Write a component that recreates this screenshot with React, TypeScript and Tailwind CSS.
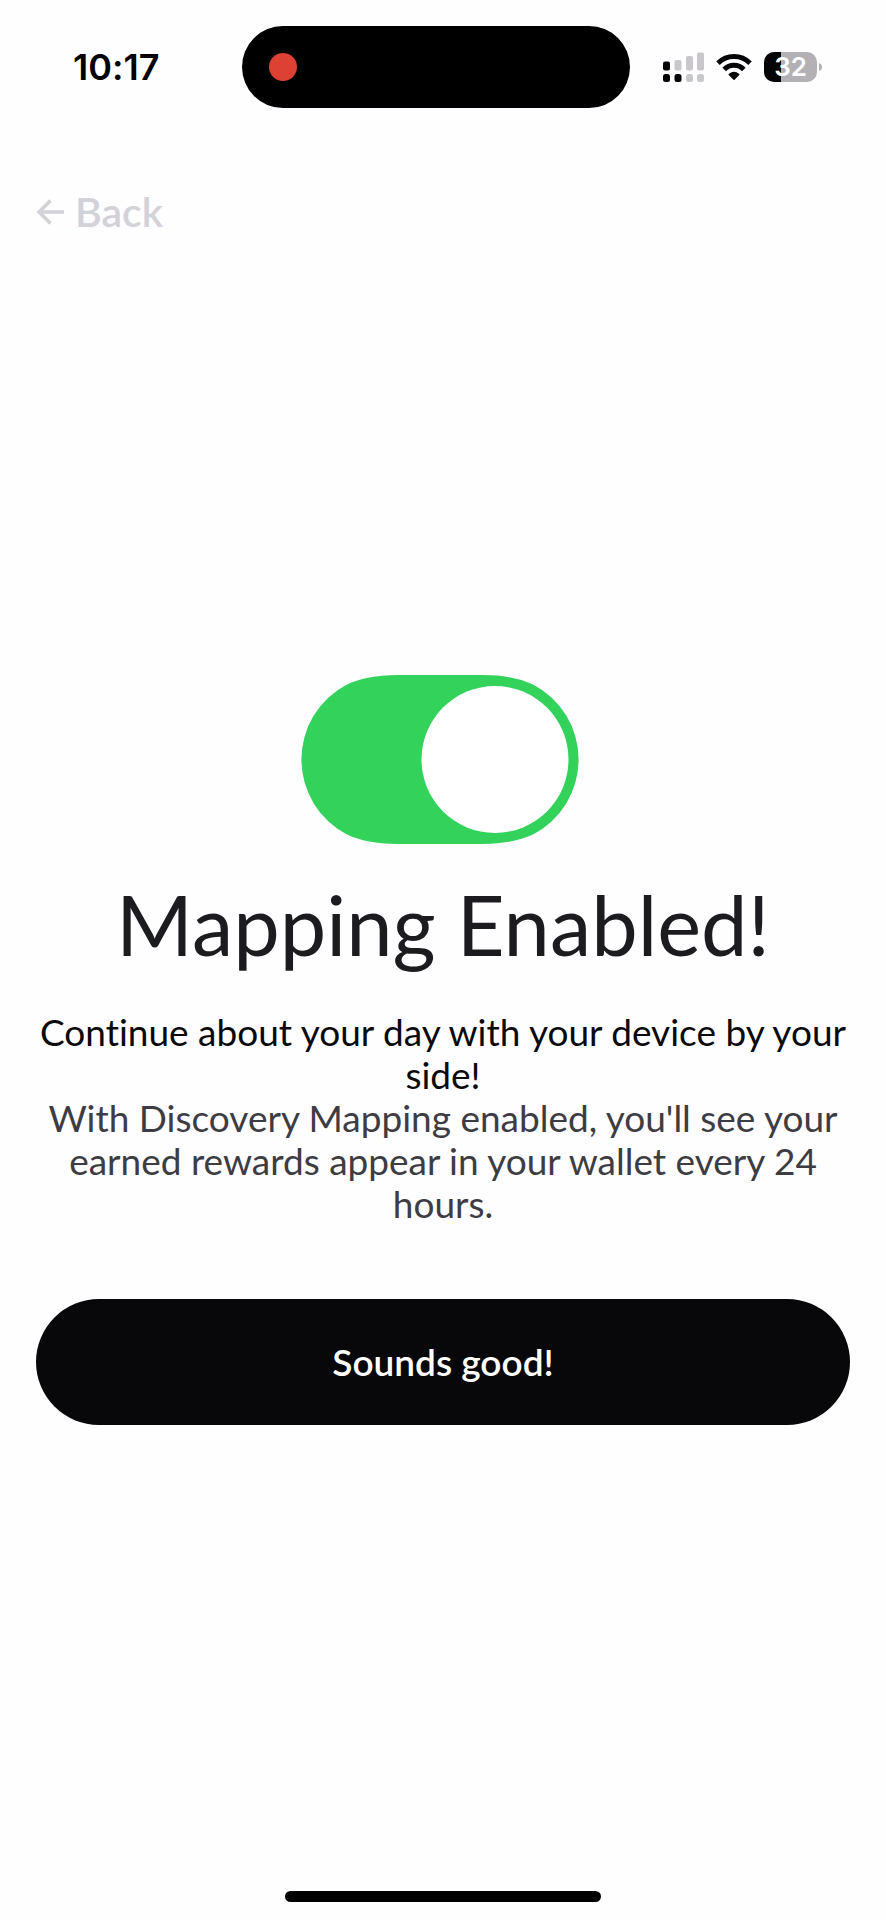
import { useState } from "react";

function SignalIcon() {
  return (
    <svg width="41" height="30" viewBox="0 0 41 30" aria-hidden="true">
      <g fill="#c9c7cb">
        <rect x="11.500" y="8" width="7" height="10.500" rx="2" />
        <rect x="23" y="4" width="7" height="14.500" rx="2" />
        <rect x="34" y="0.500" width="7" height="18" rx="2" />
        <rect x="23" y="22" width="7" height="8" rx="2.500" />
        <rect x="34" y="22" width="7" height="8" rx="2.500" />
      </g>
      <g fill="#050407">
        <rect x="0" y="9.500" width="7" height="9" rx="2" />
        <rect x="0" y="22" width="7" height="8" rx="2.500" />
        <rect x="11.500" y="22" width="7" height="8" rx="2.500" />
      </g>
    </svg>
  );
}

function WifiIcon() {
  return (
    <svg width="36" height="28" viewBox="0 0 36 28" aria-hidden="true">
      <g fill="none" stroke="#050407" strokeWidth="5">
        <path d="M2 10.200A22.600 22.600 0 0 1 34 10.200" />
        <path d="M8.200 16.500A13.700 13.700 0 0 1 27.800 16.500" />
      </g>
      <path d="M18 27.300 12.700 22Q12.200 21.300 13 20.800A8 8 0 0 1 23 20.800Q23.800 21.300 23.300 22Z" fill="#050407" />
    </svg>
  );
}

function Battery({ level }: { level: number }) {
  return (
    <div className="flex items-center gap-0.5">
      <div className="relative flex h-[30px] w-[53px] items-center justify-center overflow-hidden rounded-[10px] bg-[#b3b1b5]">
        <div className="absolute inset-y-0 left-0 bg-[#050407]" style={{ width: `${level}%` }} />
        <span className="relative text-[26px] leading-none font-semibold text-white">{level}</span>
      </div>
      <svg width="3" height="8" viewBox="0 0 3 8" aria-hidden="true">
        <path d="M0 0Q3 1 3 4T0 8Z" fill="#b3b1b5" />
      </svg>
    </div>
  );
}

function StatusBar() {
  return (
    <header className="grid grid-cols-[18fr_auto_19fr] items-center pt-[26px] font-['Inter',sans-serif]">
      <time className="pl-[73px] text-[36px] leading-none font-semibold text-black">10:17</time>
      <div className="flex h-[82px] w-[388px] items-center rounded-full bg-black pl-[27px]">
        <span className="size-7 rounded-full bg-[#dc4134]" />
      </div>
      <div className="flex items-center justify-end gap-3 pr-16">
        <SignalIcon />
        <WifiIcon />
        <Battery level={32} />
      </div>
    </header>
  );
}

function MappingSwitch() {
  const [on, setOn] = useState(true);
  return (
    <div className="relative">
      <svg width="284" height="169" viewBox="0 0 284 169" aria-hidden="true">
        <path
          d="M96 0H182C202 0 219 3.500 232 9.500A84.500 84.500 0 0 1 232 159.500C219 165.500 202 169 182 169H96C76 169 59 165.500 46 159.500A84.500 84.500 0 0 1 46 9.500C59 3.500 76 0 96 0Z"
          fill={on ? "#32d25b" : "#d2d2d8"}
        />
        <circle cx={on ? 194 : 84} cy="84.500" r="73.500" fill="#ffffff" />
      </svg>
      <input
        type="checkbox"
        role="switch"
        aria-label="Mapping"
        checked={on}
        onChange={(e) => setOn(e.target.checked)}
        className="absolute inset-0 cursor-pointer appearance-none"
      />
    </div>
  );
}

export default function App() {
  return (
    <div className="flex min-h-screen flex-col bg-[#fefdff] font-['Lato',sans-serif] [font-variant-ligatures:none]">
      <StatusBar />
      <nav className="px-9 pt-20">
        <button type="button" className="flex items-center gap-2.5 text-[41px] leading-[48px] font-semibold text-[#d3d2d8]">
          <svg width="29" height="26" viewBox="0 0 29 26" fill="none" stroke="currentColor" strokeWidth="3.500" aria-hidden="true">
            <path d="M28 13H3M14.500 1.500 3 13 14.500 24.500" />
          </svg>
          Back
        </button>
      </nav>
      <main className="flex flex-1 flex-col items-center justify-center px-9 pt-1 text-center">
        <MappingSwitch />
        <h1 className="mt-8 text-[83px] leading-[96px] text-[#1c1b20]">Mapping Enabled!</h1>
        <div className="mt-[38px] text-[37px] leading-[43px]">
          <p className="text-[#0a090c]">Continue about your day with your device by your side!</p>
          <p className="text-[#3d3c43]">
            With Discovery Mapping enabled, you'll see your earned rewards appear in your wallet every 24 hours.
          </p>
        </div>
        <button
          type="button"
          className="mt-[74px] h-[126px] w-full rounded-full bg-[#08070a] text-[37px] font-semibold text-white"
        >
          Sounds good!
        </button>
      </main>
      <footer className="flex justify-center pt-8 pb-[18px]">
        <div className="h-[11px] w-[316px] rounded-full bg-black" />
      </footer>
    </div>
  );
}
